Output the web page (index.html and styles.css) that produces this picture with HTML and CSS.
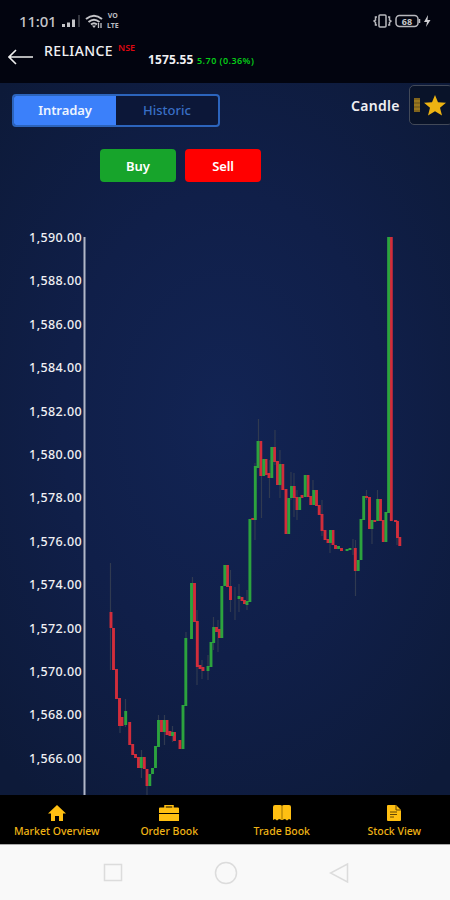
FILE: index.html
```html
<!DOCTYPE html>
<html lang="en">
<head>
<meta charset="utf-8">
<title>RELIANCE</title>
<link rel="stylesheet" href="styles.css">
</head>
<body>
<div class="app">
  <header class="header">
    <div class="status">
      <span class="clock">11:01</span>
      <svg class="signal" width="20" height="14" viewBox="0 0 20 14" fill="#c4c4c8"><path d="M0 10h3v3H0zM5 8.500h3V13H5zM10 5.500h3V13h-3z"/><path d="M16 1h2v12h-2z" fill="#34363f"/></svg>
      <svg class="wifi" width="19" height="15" viewBox="0 0 19 15" fill="none" stroke="#c4c4c8" stroke-width="2"><path d="M1 5Q9 -1.500 17 5M3.500 8Q9 3.500 14.500 8M6 10.500Q9 8 12 10.500"/><path d="M9 14l-2-2.500h4z" fill="#c4c4c8" stroke="none"/><path d="M13.500 14V9M16 9v5" stroke-width="1.300"/></svg>
      <span class="volte"><span>VO</span><span>LTE</span></span>
      <svg class="power" width="60" height="16" viewBox="0 0 60 16" fill="none" stroke="#b8b8bd" stroke-width="1.500"><rect x="6" y="2" width="7" height="12" rx="1"/><path d="M4 4H2.500v3L1 8l1.500 1.500V12H4M15 4h1.500v3L18 8l-1.500 1.500V12H15"/><rect x="23" y="2.500" width="22" height="11" rx="3.500"/><path d="M46.500 6v4"/><text x="34" y="11.500" class="charge">68</text><path d="M55 2l-4 7h3l-1 5 4.500-7h-3z" fill="#d0d0d4" stroke="none"/></svg>
    </div>
    <div class="quote">
      <svg class="back" width="26" height="16" viewBox="0 0 26 16" fill="none" stroke="#eee" stroke-width="1.600"><path d="M8 1L1 8l7 7M1 8h24"/></svg>
      <span class="symbol">RELIANCE</span><span class="exchange">NSE</span>
      <span class="price">1575.55</span><span class="change">5.70 (0.36%)</span>
    </div>
  </header>
  <main class="main">
    <div class="controls">
      <div class="range"><span class="range-item active">Intraday</span><span class="range-item">Historic</span></div>
      <span class="type">Candle</span>
      <div class="favorite"><svg width="34" height="24" viewBox="0 0 34 24"><path d="M1 5h6v14H1z" fill="#80641d"/><path d="M1 8h6M1 12h6M1 16h6" stroke="#b58a20"/><path d="M22 2l3 7.200 8 .6-6 5 2 7.700-7-4.200-7 4.200 2-7.700-6-5 8-.6z" fill="#edb312"/></svg></div>
    </div>
    <div class="trade"><button class="buy">Buy</button><button class="sell">Sell</button></div>
    <div class="chart">
      <div class="axis"><span>1,590.00</span><span>1,588.00</span><span>1,586.00</span><span>1,584.00</span><span>1,582.00</span><span>1,580.00</span><span>1,578.00</span><span>1,576.00</span><span>1,574.00</span><span>1,572.00</span><span>1,570.00</span><span>1,568.00</span><span>1,566.00</span></div>
      <svg class="plot" width="367" height="580" viewBox="83 215 367 580" fill="none">
        <path class="scale" d="M84.500 237V795"/>
        <path class="wick" d="M110.500 563V670M120 700V733M125.500 699V727M141.500 750V778M147 780V795M158.500 715V730M164.500 715V745M172.500 726V742M186 632V650M192.500 577V590M197 610V685M202 660V679M208 655V680M213.500 617V650M218 620V652M230.500 570V612M235 587V620M239 584V612M247 590V610M255 463V540M258.500 419V450M261.500 450V518M269.500 460V498M275 430V465M280 450V498M291 472V500M294 473V517M297 490V520M313 480V500M322 500V536M330 530V553M353 539V555M355.500 540V596M366.500 490V500M372 520V544M377.500 490V515M397 520V545"/>
        <path class="down" d="M111 612V628M113.500 628V670M116.500 669V699M119.500 698V726M122 717V726M129.700 722V745M132.700 744V755M135.500 754V758M138.500 757V768M144.300 757V769M147 769V786M161.500 720V732M167 720V735M170 731V736M174.500 732V741M180 740V749M194.500 583V622M197.300 621V667M200 665V669M203 667V671M216.500 627V632M219.500 629V638M227.500 565V587M230.500 586V600M242 597V601M244.500 600V604M252.700 518V520M260.800 441V476M266 459V475M269 473V478M274.500 447V462M277.500 461V485M282.800 464V490M286 489V534M294.200 486V498M297 497V510M302 495V498M308 475V497M310.800 496V505M316.500 490V506M319.200 505V515M322 514V531M325 530V540M328 539V543M333 530V545M335.500 545V549M341.500 548V551M355.300 548V571M366.500 496V498M369.500 497V529M374.700 520V522M380.500 499V521M383.300 520V542M391.300 237V521M395.500 520V522M397.500 521V538M399.800 537V546"/>
        <path class="up" d="M125.700 711V725M141.300 757V768M149.800 774V786M152.500 768V774M155.500 746V768M158.500 720V747M164.300 720V732M172.500 732V736M183 705V749M185.800 638V706M191.500 583V639M208 666V671M211 642V667M213.700 627V643M221.800 586V638M224.800 565V586M239 596V599M247 601V605M249.900 519V602M255.300 466V520M258 441V468M263.700 459V476M271.800 447V478M280 464V485M288.700 498V534M291.500 486V498M299.700 497V510M305.200 475V497M313.700 490V505M330.500 530V543M338.500 546V549M347 549V551M350 548V550M358.200 560V571M361 519V560M363.700 496V520M371.900 520V529M377.700 499V521M385.900 512V542M388.600 237V513"/>
      </svg>
    </div>
  </main>
  <nav class="tabs">
    <span class="tab"><svg width="18" height="18" viewBox="0 0 18 18"><path d="M9 1L0 9.500h3V17h4v-5h4v5h4V9.500h3z" fill="#ffbf12"/></svg>Market Overview</span>
    <span class="tab"><svg width="22" height="18" viewBox="0 0 22 18"><path d="M7 4V1.700h8V4" fill="none" stroke="#ffbf12" stroke-width="1.500"/><path d="M2 3.500h18q1 0 1 1V9H1V4.500q0-1 1-1zM1 10h20v7H1z" fill="#ffbf12"/></svg>Order Book</span>
    <span class="tab"><svg width="18" height="18" viewBox="0 0 18 18"><path d="M0 3q0-2 2-2h5q1.500 0 2 1 .5-1 2-1h5q2 0 2 2v13l-2-1-2 1.500-2-1.500-3 1-3-1-2 1.500L2 15l-2 1z" fill="#ffbf12"/><path d="M9 2v13" stroke="#9d7204"/></svg>Trade Book</span>
    <span class="tab"><svg width="16" height="18" viewBox="0 0 16 18"><path d="M1 2q0-1 1-1h8l5 5v10q0 1-1 1H2q-1 0-1-1z" fill="#ffbf12"/><path d="M10 1v5h5M4 8h7M4 10.500h7M4 13h4" fill="none" stroke="#644703"/></svg>Stock View</span>
  </nav>
  <footer class="system">
    <svg width="20" height="22" viewBox="0 0 20 22"><rect x="1.500" y="2.500" width="17" height="16"/></svg>
    <svg width="24" height="24" viewBox="0 0 24 24"><circle cx="12" cy="12" r="10.500"/></svg>
    <svg width="20" height="24" viewBox="0 0 20 24"><path d="M18.500 3v18L1.500 12z"/></svg>
  </footer>
</div>
</body>
</html>
```
FILE: styles.css
```css
* { box-sizing: border-box; }
body { margin: 0; font-family: "Noto Sans", "Open Sans", sans-serif; color: #f0f0f3; }
.app { width: 450px; height: 900px; display: flex; flex-direction: column; overflow: hidden; background: #000; }
.header { height: 83px; flex: none; background: #02040f; }
.status { height: 40px; padding: 2px 17px 0 19px; display: flex; align-items: center; }
.clock { font-size: 15px; font-weight: 500; color: #c4c4c8; width: 43px; letter-spacing: -.2px; white-space: nowrap; }
.wifi { margin-left: 3px; }
.volte { margin-left: 3px; display: flex; flex-direction: column; align-items: center; font-size: 7px; line-height: 10px; height: 18px; justify-content: center; font-weight: 700; color: #bcbcc0; }
.power { margin-left: auto; }
.charge { font-size: 9px; font-weight: 700; fill: #c8c8cc; stroke: none; text-anchor: middle; }
.quote { display: flex; height: 43px; padding-left: 8px; line-height: 20px; white-space: nowrap; }
.back { margin-top: 9px; }
.symbol { margin: 1px 0 0 10px; width: 69px; font-size: 14px; font-weight: 500; letter-spacing: .4px; }
.exchange { margin: -2px 0 0 5px; width: 18px; font-size: 9px; font-weight: 600; color: #df0710; }
.price { margin: 10px 0 0 12px; width: 45px; font-size: 12px; font-weight: 700; letter-spacing: .15px; }
.change { margin: 11px 0 0 4px; font-size: 9px; font-weight: 600; color: #05cb17; letter-spacing: .45px; }
.main { height: 712px; flex: none; background: radial-gradient(ellipse 72% 65% at 50% 48%, #122454 0%, #101f49 50%, #0d1a39 100%); }
.controls { display: flex; height: 66px; padding-left: 12px; }
.range { display: flex; margin-top: 11px; width: 208px; height: 33px; border: 2px solid #2c64bc; border-radius: 4px; background: #0c1738; overflow: hidden; flex: none; }
.range-item { flex: 1; text-align: center; line-height: 28px; font-size: 13px; font-weight: 500; color: #396fc6; }
.range-item.active { background: #3b80fa; color: #edf4ff; font-weight: 600; letter-spacing: -.1px; }
.type { margin: 13px 0 0 131px; width: 58px; flex: none; font-size: 14px; line-height: 20px; font-weight: 600; letter-spacing: .3px; }
.favorite { width: 44px; flex: none; height: 40px; margin-top: 2px; border: 1px solid #424958; border-radius: 5px; background: #091329; padding: 7px 0 0 3px; }
.trade { display: flex; gap: 9px; height: 67px; padding-left: 100px; }
.trade button { width: 76px; height: 33px; border: 0; border-radius: 4px; color: #fff; font: 600 13px "Noto Sans", sans-serif; padding: 0; }
.trade .buy { background: #17a42b; }
.trade .sell { background: #ff0000; letter-spacing: -.2px; }
.chart { display: flex; height: 579px; }
.plot { flex: none; margin-top: -1px; }
.axis { width: 83px; flex: none; padding-right: 1px; text-align: right; font-size: 12.500px; font-weight: 500; letter-spacing: .4px; }
.axis span { display: block; height: 43.420px; line-height: 43px; }
.scale { stroke: #b1b7c8; stroke-width: 2; }
.wick { stroke: #303a50; stroke-width: 1.200; }
.down { stroke: #d12d3b; stroke-width: 2.900; }
.up { stroke: #2ca33e; stroke-width: 2.900; }
.tabs { display: grid; grid-template-columns: repeat(4, 1fr); height: 49px; flex: none; background: #000; }
.tab { display: flex; flex-direction: column; align-items: center; padding: 9px 0 0 1px; color: #efb315; font-size: 10.500px; font-weight: 500; line-height: 19px; white-space: nowrap; }
.system { display: flex; align-items: center; justify-content: center; gap: 91px; padding-left: 1px; height: 56px; flex: none; background: #f9f9f9; border-top: 1px solid #aaa; }
.system svg { fill: none; stroke: #dcdcdc; stroke-width: 1.500; }
```
